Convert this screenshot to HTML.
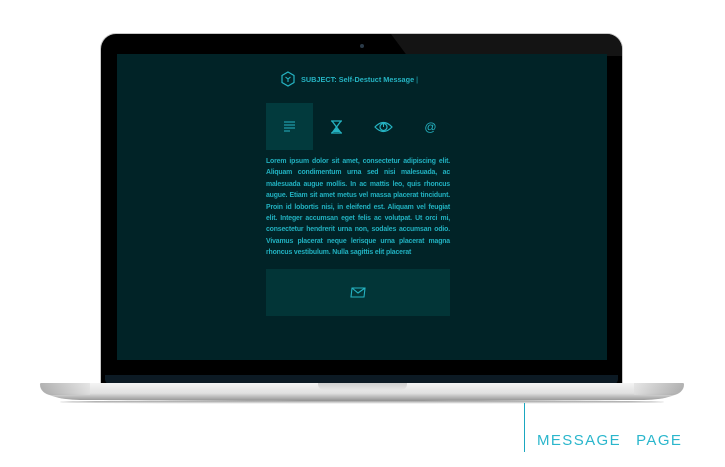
<!DOCTYPE html>
<html><head><meta charset="utf-8"><style>
*{margin:0;padding:0;box-sizing:border-box}
body{width:725px;height:467px;background:#fff;position:relative;overflow:hidden;font-family:"Liberation Sans",sans-serif}
.lid{position:absolute;left:100px;top:33px;width:523px;height:352px;background:#000;border-radius:16px 16px 0 0;border:1.5px solid #c9c9c9;border-bottom:none;overflow:hidden}
.gloss{position:absolute;left:290px;top:0;width:233px;height:22px;background:#141414;clip-path:polygon(0 0,100% 0,100% 100%,7% 100%)}
.cam{position:absolute;left:259px;top:10px;width:4px;height:4px;border-radius:50%;background:#2a3a48}
.bez{position:absolute;left:4px;bottom:0;width:513px;height:10px;background:#0c1a24;border-radius:0 0 6px 6px}
.screen{position:absolute;left:117px;top:54px;width:490px;height:306px;background:#012327}
.base{position:absolute;left:40px;top:383px;width:644px;height:17px;background:linear-gradient(#f4f4f4,#e0e0e0 60%,#9a9a9a);border-radius:2px 2px 40px 40px/2px 2px 14px 14px}
.base:before{content:"";position:absolute;left:0;top:0;width:50px;height:12px;background:linear-gradient(90deg,#888,#ddd);border-radius:2px 0 0 20px;opacity:.6}
.base:after{content:"";position:absolute;right:0;top:0;width:50px;height:12px;background:linear-gradient(270deg,#888,#ddd);border-radius:0 2px 20px 0;opacity:.6}
.notch{position:absolute;left:318px;top:383px;width:89px;height:7px;background:linear-gradient(#cfcfcf,#e6e6e6);border-radius:0 0 6px 6px}
.shadow{position:absolute;left:60px;top:400px;width:604px;height:4px;background:linear-gradient(#888,#fff);border-radius:50%}
.line{position:absolute;left:524px;top:403px;width:1px;height:49px;background:#1aa7c0}
.lbl{position:absolute;left:537px;top:432px;font-size:15px;color:#2ab6cc;letter-spacing:1.4px;word-spacing:2px}
.subj{position:absolute;left:301px;top:75px;font-size:7.3px;color:#25b3c2;font-weight:bold}
.tab{position:absolute;top:103px;width:47px;height:47px}
.txt{position:absolute;left:266px;top:156px;width:184px;font-size:6.9px;line-height:11.4px;color:#21b0bf;text-align:justify;font-weight:bold;letter-spacing:-0.15px}
.btn{position:absolute;left:266px;top:269px;width:184px;height:47px;background:#023537}
</style></head><body>
<div class="lid"><div class="gloss"></div><div class="cam"></div><div class="bez"></div></div>
<div class="screen"></div>
<div class="base"></div><div class="notch"></div><div class="shadow"></div>
<svg style="position:absolute;left:281px;top:71px" width="14" height="16" viewBox="0 0 14 16"><path d="M7 1L13 4.5V11.5L7 15L1 11.5V4.5Z" fill="none" stroke="#25b3c2" stroke-width="1.2"/><path d="M4.5 6L7 8L9.5 6M7 8V11" fill="none" stroke="#25b3c2" stroke-width="1.1"/></svg>
<div class="subj">SUBJECT: Self-Destuct Message <span style="font-weight:normal">|</span></div>
<div class="tab" style="left:266px;background:#023a3d"><svg width="47" height="47"><path d="M18 19H29M18 22H29M18 25H29M18 28H24" stroke="#25b3c2" stroke-width="1.1"/></svg></div>
<div class="tab" style="left:313px"><svg width="47" height="47"><path d="M18 18H29M18 30H29M19 18L28 30M28 18L19 30" stroke="#25b3c2" stroke-width="1.3" fill="none"/><path d="M20 29L23.5 25L27 29Z" fill="#25b3c2"/></svg></div>
<div class="tab" style="left:360px"><svg width="47" height="47"><path d="M15 24Q23.5 15 32 24Q23.5 33 15 24Z" fill="none" stroke="#25b3c2" stroke-width="1.2"/><circle cx="23.5" cy="24" r="3.5" fill="none" stroke="#25b3c2" stroke-width="1.2"/><path d="M23.5 24V20.5" stroke="#25b3c2"/></svg></div>
<div class="tab" style="left:407px"><svg width="47" height="47"><text x="23.5" y="28" text-anchor="middle" font-family="Liberation Sans" font-size="12" fill="#25b3c2">@</text></svg></div>
<div class="txt">Lorem ipsum dolor sit amet, consectetur adipiscing elit. Aliquam condimentum urna sed nisi malesuada, ac malesuada augue mollis. In ac mattis leo, quis rhoncus augue. Etiam sit amet metus vel massa placerat tincidunt. Proin id lobortis nisi, in eleifend est. Aliquam vel feugiat elit. Integer accumsan eget felis ac volutpat. Ut orci mi, consectetur hendrerit urna non, sodales accumsan odio. Vivamus placerat neque lerisque urna placerat magna rhoncus vestibulum. Nulla sagittis elit placerat</div>
<div class="btn"><svg width="184" height="47"><path d="M86 19H99L98 28H85Z M86 19L92 24L99 19" fill="none" stroke="#25b3c2" stroke-width="1.1"/></svg></div>
<div class="line"></div>
<div class="lbl">MESSAGE&nbsp; PAGE</div>
</body></html>
